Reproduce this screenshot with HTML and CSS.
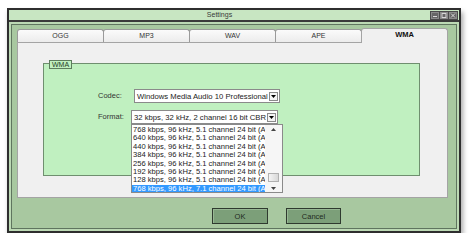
FILE: index.html
```html
<!DOCTYPE html>
<html>
<head>
<meta charset="utf-8">
<link rel="stylesheet" href="styles.css">
</head>
<body>
<div class="window">
  <div class="titlebar">
    <div class="title">Settings</div>
    <div class="winbtns">
      <span class="wb"><svg width="6" height="5" viewBox="0 0 6 5"><rect x="1" y="3" width="4" height="1" fill="#d8d8d8"/></svg></span>
      <span class="wb"><svg width="6" height="5" viewBox="0 0 6 5"><rect x="1" y="0.5" width="4" height="4" fill="none" stroke="#d8d8d8" stroke-width="1"/></svg></span>
      <span class="wb"><svg width="6" height="5" viewBox="0 0 6 5"><path d="M1 0.5 L5 4.5 M5 0.5 L1 4.5" stroke="#d8d8d8" stroke-width="1"/></svg></span>
    </div>
  </div>
  <div class="body">
    <div class="tabs">
      <div class="tab">OGG</div>
      <div class="tab">MP3</div>
      <div class="tab">WAV</div>
      <div class="tab">APE</div>
      <div class="tab active">WMA</div>
    </div>
    <div class="panel">
      <div class="group">
        <div class="legend">WMA</div>
        <div class="form">
          <div class="label">Codec:</div>
          <div class="select codec">
            <span class="val">Windows Media Audio 10 Professional</span>
            <span class="arrow"><svg width="5" height="3" viewBox="0 0 5 3"><path d="M0 0 H5 L2.5 3 Z" fill="#000"/></svg></span>
          </div>
          <div class="label">Format:</div>
          <div class="select format">
            <span class="val">32 kbps, 32 kHz, 2 channel 16 bit CBR</span>
            <span class="arrow"><svg width="5" height="3" viewBox="0 0 5 3"><path d="M0 0 H5 L2.5 3 Z" fill="#000"/></svg></span>
            <div class="list">
              <div class="items">
                <div class="item">768 kbps, 96 kHz, 5.1 channel 24 bit (A</div>
                <div class="item">640 kbps, 96 kHz, 5.1 channel 24 bit (A</div>
                <div class="item">440 kbps, 96 kHz, 5.1 channel 24 bit (A</div>
                <div class="item">384 kbps, 96 kHz, 5.1 channel 24 bit (A</div>
                <div class="item">256 kbps, 96 kHz, 5.1 channel 24 bit (A</div>
                <div class="item">192 kbps, 96 kHz, 5.1 channel 24 bit (A</div>
                <div class="item">128 kbps, 96 kHz, 5.1 channel 24 bit (A</div>
                <div class="item sel">768 kbps, 96 kHz, 7.1 channel 24 bit (A</div>
              </div>
              <div class="scroll">
                <span class="sarrow"><svg width="5" height="3" viewBox="0 0 5 3"><path d="M0 3 H5 L2.5 0 Z" fill="#444"/></svg></span>
                <span class="track"><span class="thumb"></span></span>
                <span class="sarrow"><svg width="5" height="3" viewBox="0 0 5 3"><path d="M0 0 H5 L2.5 3 Z" fill="#444"/></svg></span>
              </div>
            </div>
          </div>
        </div>
      </div>
    </div>
    <div class="buttons">
      <button class="btn ok">OK</button>
      <button class="btn cancel">Cancel</button>
    </div>
  </div>
</div>
</body>
</html>
```

FILE: styles.css
```css
html, body {
  margin: 0;
  padding: 0;
  background: #ffffff;
}
body {
  font-family: "Liberation Sans", Arial, sans-serif;
  color: #222;
}
.window {
  box-sizing: border-box;
  margin: 8px 0 0 7px;
  width: 454px;
  height: 225px;
  border: 2px solid #2e2e2e;
  background: #a8c8a0;
  box-shadow: 2px 4px 5px rgba(0, 0, 0, 0.35);
  display: flex;
  flex-direction: column;
}
.titlebar {
  height: 10px;
  flex: none;
  background: #c8e6c2;
  border-bottom: 2px solid #3a3a3a;
  display: flex;
  align-items: center;
}
.title {
  flex: 1;
  text-align: center;
  font-size: 7px;
  color: #3a3a3a;
  line-height: 10px;
}
.winbtns {
  display: flex;
  gap: 1px;
  padding: 1px;
  background: #4a4a4a;
  margin-right: 1px;
}
.wb {
  width: 8px;
  height: 7px;
  box-sizing: border-box;
  border: 1px solid #8a8a8a;
  background: #666;
  display: flex;
  align-items: center;
  justify-content: center;
}
.wb svg { display: block; }
.body {
  flex: 1;
  padding: 7px 11px 0 8px;
  box-shadow: inset 0 0 0 2px #bcd9b4, inset 0 0 0 3px #5f755f;
  display: flex;
  flex-direction: column;
}
.tabs {
  display: flex;
  height: 13px;
  position: relative;
  z-index: 2;
}
.tab {
  flex: 1;
  box-sizing: border-box;
  height: 13px;
  margin-left: -1px;
  border: 1px solid #9a9a9a;
  border-bottom: none;
  border-radius: 3px 3px 0 0;
  background: linear-gradient(#fbfbfb, #ececec);
  font-size: 7px;
  color: #333;
  text-align: center;
  line-height: 12px;
}
.tab:first-child { margin-left: 0; }
.tab.active {
  height: 15px;
  margin-top: -1px;
  background: #f0f0f0;
  font-weight: bold;
  font-size: 7.5px;
  color: #111;
  line-height: 12px;
  border-color: #a4a4a4;
}
.panel {
  box-sizing: border-box;
  height: 156px;
  border: 1px solid #a4a4a4;
  background: #f0f0f0;
  padding: 20px 0 0 25px;
}
.group {
  box-sizing: border-box;
  width: 377px;
  height: 113px;
  background: #c0f0c0;
  border: 1px solid #6f8f6f;
  position: relative;
}
.legend {
  position: absolute;
  left: 5px;
  top: -4px;
  border: 1px solid #5d7d5d;
  background: #c0f0c0;
  font-size: 7px;
  line-height: 7px;
  padding: 0 2px;
  color: #244024;
}
.form {
  display: grid;
  grid-template-columns: 33px auto;
  row-gap: 7px;
  padding: 25px 0 0 54px;
  justify-content: start;
}
.label {
  font-size: 7.5px;
  color: #333;
  line-height: 14px;
}
.select {
  box-sizing: border-box;
  height: 14px;
  background: #fff;
  border: 1px solid #8a8a8a;
  display: flex;
  align-items: center;
  position: relative;
}
.select.codec { width: 146px; margin-left: 3px; }
.select.format { width: 147px; }
.val {
  flex: 1;
  overflow: hidden;
  white-space: nowrap;
  font-size: 7.7px;
  padding-left: 2px;
  color: #222;
}
.arrow {
  box-sizing: border-box;
  width: 9px;
  height: 9px;
  margin-right: 1px;
  border: 1px solid #8a8a8a;
  background: #f4f4f4;
  display: flex;
  align-items: center;
  justify-content: center;
  flex: none;
}
.arrow svg, .sarrow svg { display: block; }
.list {
  position: absolute;
  left: -1px;
  top: 13px;
  box-sizing: border-box;
  width: 152px;
  height: 69px;
  background: #fff;
  border: 1px solid #8a8a8a;
  display: flex;
  z-index: 5;
}
.items {
  flex: 1;
  overflow: hidden;
  padding-top: 1px;
}
.item {
  font-size: 7.6px;
  line-height: 8.4px;
  height: 8.4px;
  white-space: nowrap;
  padding-left: 1px;
  color: #222;
}
.item.sel {
  background: #3399ff;
  color: #fff;
}
.scroll {
  width: 17px;
  flex: none;
  background: #f6f6f6;
  display: flex;
  flex-direction: column;
  align-items: center;
}
.sarrow {
  height: 8px;
  width: 17px;
  display: flex;
  align-items: center;
  justify-content: center;
  flex: none;
}
.track {
  flex: 1;
  width: 17px;
  display: flex;
  flex-direction: column;
  justify-content: flex-end;
  align-items: center;
}
.thumb {
  width: 11px;
  height: 9px;
  box-sizing: border-box;
  border: 1px solid #b0b0b0;
  background: linear-gradient(90deg, #f4f4f4, #d8d8d8);
  margin-bottom: 2px;
}
.buttons {
  display: flex;
  justify-content: flex-end;
  gap: 18px;
  padding-right: 107px;
  margin-top: 10px;
}
.btn {
  box-sizing: border-box;
  height: 16px;
  border: 1px solid #2f3a2f;
  background: #7c9f79;
  box-shadow: inset 1px 1px 0 #98b894;
  font-family: "Liberation Sans", Arial, sans-serif;
  font-size: 7.5px;
  color: #1e2a1e;
  padding: 0;
}
.btn.ok { width: 56px; }
.btn.cancel { width: 55px; }
```
